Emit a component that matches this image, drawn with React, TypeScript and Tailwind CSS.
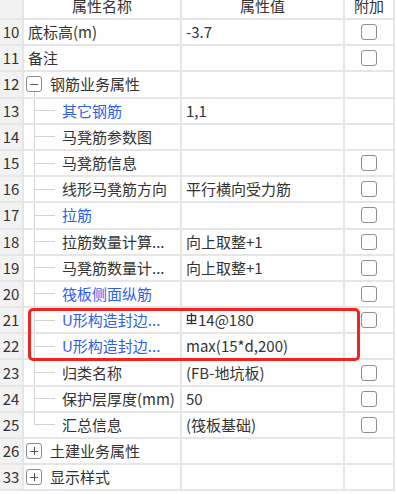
import React from 'react';

type Row = {
  no: string;
  name: string;
  value?: string;
  kind: 'top' | 'group' | 'child' | 'last';
  blue?: boolean;
  check?: boolean;
  expanded?: boolean;
  rebar?: boolean;
};

const rows: Row[] = [
  { no: '10', name: '底标高(m)', value: '-3.7', kind: 'top', check: true },
  { no: '11', name: '备注', kind: 'top', check: true },
  { no: '12', name: '钢筋业务属性', kind: 'group', expanded: true },
  { no: '13', name: '其它钢筋', value: '1,1', kind: 'child', blue: true },
  { no: '14', name: '马凳筋参数图', kind: 'child' },
  { no: '15', name: '马凳筋信息', kind: 'child', check: true },
  { no: '16', name: '线形马凳筋方向', value: '平行横向受力筋', kind: 'child', check: true },
  { no: '17', name: '拉筋', kind: 'child', blue: true, check: true },
  { no: '18', name: '拉筋数量计算...', value: '向上取整+1', kind: 'child', check: true },
  { no: '19', name: '马凳筋数量计...', value: '向上取整+1', kind: 'child', check: true },
  { no: '20', name: '筏板侧面纵筋', kind: 'child', blue: true, check: true },
  { no: '21', name: 'U形构造封边...', value: '14@180', kind: 'child', blue: true, check: true, rebar: true },
  { no: '22', name: 'U形构造封边...', value: 'max(15*d,200)', kind: 'child', blue: true },
  { no: '23', name: '归类名称', value: '(FB-地坑板)', kind: 'child', check: true },
  { no: '24', name: '保护层厚度(mm)', value: '50', kind: 'child', check: true },
  { no: '25', name: '汇总信息', value: '(筏板基础)', kind: 'last', check: true },
  { no: '26', name: '土建业务属性', kind: 'group' },
  { no: '33', name: '显示样式', kind: 'group' },
];

const cell = 'border-b-2 border-r-2 border-[#e6e6e6]';

function RebarMark() {
  return (
    <svg width="11" height="14" viewBox="0 0 11 14" className="mr-[1px] -mt-[3px] shrink-0">
      <g stroke="#333" strokeWidth="1.3" fill="none">
        <line x1="5.5" y1="1" x2="5.5" y2="11" />
        <rect x="1.5" y="3.5" width="8" height="5" />
        <line x1="0.5" y1="11.5" x2="10.5" y2="11.5" />
      </g>
    </svg>
  );
}

function ExpandBox({ open }: { open?: boolean }) {
  return (
    <div className="w-[16px] h-[16px] rounded-[3px] border border-[#8c8c8c] bg-white flex items-center justify-center">
      <div className="w-[8px] h-px bg-[#555]" />
      {!open && <div className="absolute w-px h-[8px] bg-[#555]" />}
    </div>
  );
}

function NameCell({ row }: { row: Row }) {
  const color = row.blue ? 'text-[#2f5fe8]' : 'text-[#333]';
  if (row.kind === 'top') {
    return <div className={`w-[158px] ${cell} flex items-center pl-[4px] ${color}`}>{row.name}</div>;
  }
  if (row.kind === 'group') {
    return (
      <div className={`w-[158px] ${cell} flex items-stretch pl-[2px] ${color}`}>
        <div className="w-[16px] flex flex-col">
          <div className="flex-1" />
          <div className="relative flex items-center justify-center">
            <ExpandBox open={row.expanded} />
          </div>
          <div className={`flex-1 ${row.expanded ? 'ml-[8px] border-l border-[#d2d2d2]' : ''}`} />
        </div>
        <div className="flex items-center ml-[8px]">{row.name}</div>
      </div>
    );
  }
  return (
    <div className={`w-[158px] ${cell} flex items-stretch pl-[10px] ${color}`}>
      <div className="w-[21px] flex flex-col">
        <div className="flex-1 border-l border-[#d2d2d2]" />
        <div className="h-px bg-[#d2d2d2]" />
        <div className={`flex-1 ${row.kind === 'last' ? '' : 'border-l border-[#d2d2d2]'}`} />
      </div>
      <div className="flex items-center ml-[7px] whitespace-nowrap">{row.name}</div>
    </div>
  );
}

export default function App() {
  return (
    <div
      className="relative w-[397px] h-[494px] overflow-hidden bg-white text-[15px] text-[#333]"
      style={{ fontFamily: '"Noto Sans CJK SC", "Noto Sans", sans-serif' }}
    >
      <div className="flex h-[20px] overflow-hidden leading-[11px]">
        <div className={`w-[24px] bg-[#f2f2f2] ${cell}`} />
        <div className={`w-[158px] ${cell} text-center`}>属性名称</div>
        <div className={`w-[163px] ${cell} text-center`}>属性值</div>
        <div className={`w-[50px] ${cell} text-center`}>附加</div>
      </div>
      {rows.map((row) => (
        <div key={row.no} className="flex h-[26.2px] leading-[20px]">
          <div className={`w-[24px] bg-[#f2f2f2] ${cell} flex items-center justify-center`}>{row.no}</div>
          <NameCell row={row} />
          <div className={`w-[163px] ${cell} flex items-center pl-[4px] whitespace-nowrap`}>
            {row.rebar && <RebarMark />}
            {row.value}
          </div>
          <div className={`w-[50px] ${cell} flex items-center justify-center`}>
            {row.check && <div className="w-[16px] h-[16px] rounded-[3px] border-[1.5px] border-[#8f8f8f] bg-white" />}
          </div>
        </div>
      ))}
      <div className="absolute left-[28px] top-[308px] w-[332px] h-[53px] border-[3px] border-[#f52222] rounded-[5px] pointer-events-none" />
    </div>
  );
}
